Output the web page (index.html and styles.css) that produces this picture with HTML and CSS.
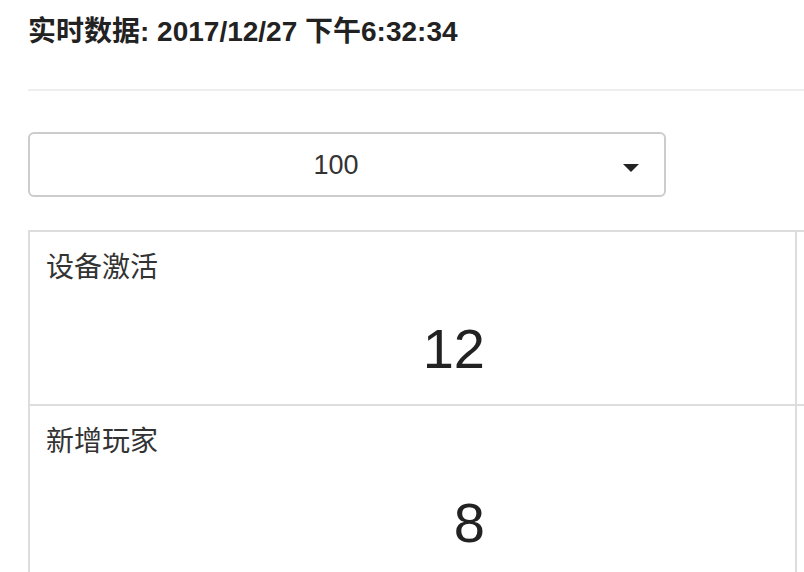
FILE: index.html
```html
<!DOCTYPE html>
<html lang="zh-CN">
<head>
<meta charset="utf-8" />
<title>实时数据</title>
<meta content="width=device-width, initial-scale=1" name="viewport"/>
<link rel="stylesheet" href="styles.css">
</head>
<body>
<div class="page">

<h4 class="title">实时数据: 2017/12/27 下午6:32:34</h4>
<hr class="rule"/>

<!-- range picker -->
<div class="picker">
    <span class="picker-value">100</span>
    <span class="caret"></span>
</div>

<!-- stats: -->
<table class="stats">
    <tr>
        <td>
            <div class="stat-name">设备激活</div>
            <div class="stat-num">12</div>
        </td>
        <td></td>
    </tr>
    <tr>
        <td>
            <div class="stat-name">新增玩家</div>
            <div class="stat-num">8</div>
        </td>
        <td></td>
    </tr>
</table>

</div>
</body>
</html>
```

FILE: styles.css
```css
html, body {
    margin: 0;
    overflow: hidden;
    background: #fff;
}
body {
    color: #333;
    font-family: "Liberation Sans", "Noto Sans CJK SC", sans-serif;
}
.page {
    width: 1560px;
    padding-left: 28px;
}

.title {
    margin: 17px 0 0 0;
    font-size: 28px;
    line-height: 1.1;
    font-weight: bold;
    color: #222;
}
.rule {
    margin: 41px 0 0 0;
    border: 0;
    border-top: 2px solid #eee;
}

/* picker: */
.picker {
    position: relative;
    box-sizing: border-box;
    width: 638px;
    height: 65px;
    margin-top: 41px;
    padding-right: 22px;
    border: 2px solid #ccc;
    border-radius: 6px;
    text-align: center;
    font-size: 27px;
    line-height: 63px;
}
.caret {
    position: absolute;
    right: 25px;
    top: 30px;
    width: 0;
    height: 0;
    border-left: 8px solid transparent;
    border-right: 8px solid transparent;
    border-top: 8px solid #222;
}

/* stats: */
.stats {
    margin-top: 33px;
    border-collapse: collapse;
}
.stats td {
    width: 733px;
    padding: 21px 16px 25px 16px;
    border: 2px solid #ddd;
    vertical-align: top;
}
.stat-name {
    font-size: 28px;
    line-height: 1.1;
}
.stat-num {
    margin-top: 34px;
    padding-right: 294px;
    text-align: right;
    font-size: 56px;
    line-height: 1.1;
    color: #222;
}
```
